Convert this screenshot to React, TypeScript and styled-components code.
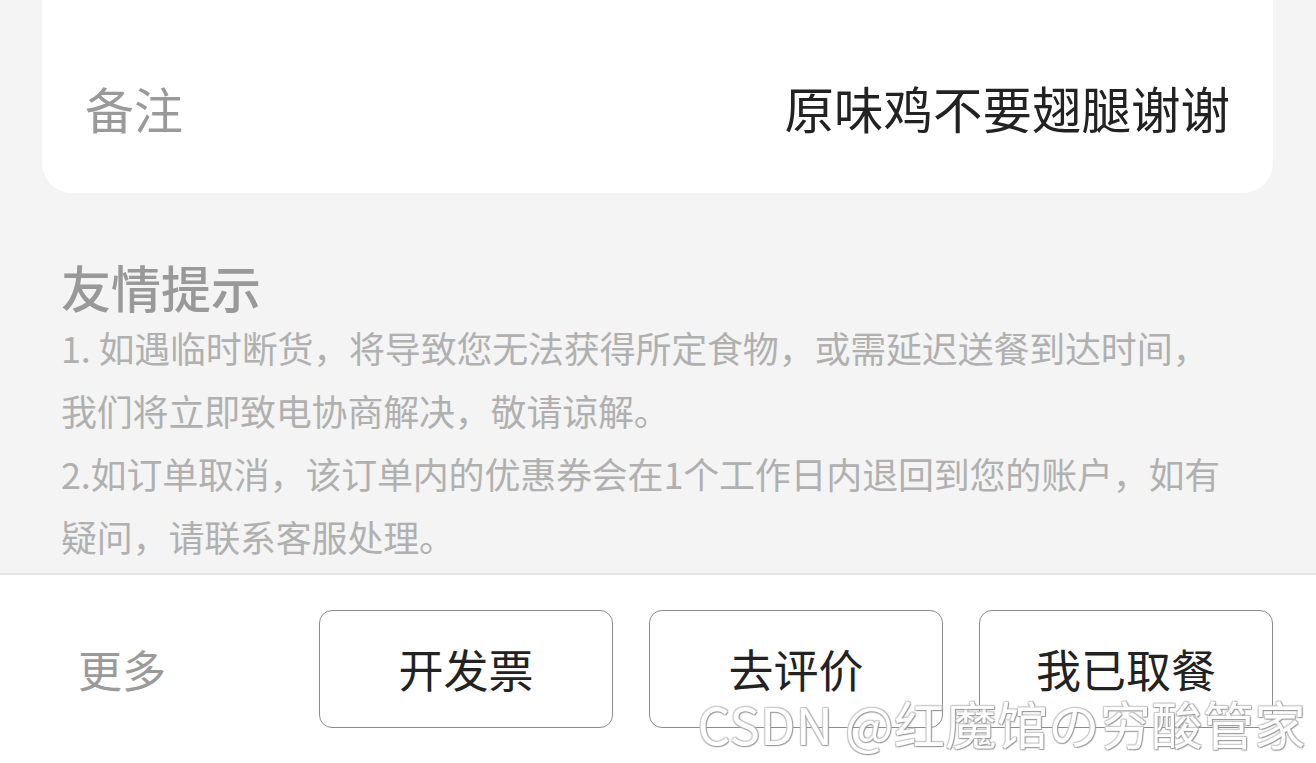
import React from 'react';
import styled, { createGlobalStyle } from 'styled-components';

const GlobalStyle = createGlobalStyle`
  html, body {
    margin: 0;
    padding: 0;
    background: #f4f4f4;
  }
  body {
    font-family: "Noto Sans CJK SC", "Noto Sans", sans-serif;
  }
`;

const actions = ['开发票', '去评价', '我已取餐'];

const App = () => {
  return (
    <Page>
      <GlobalStyle />
      <RemarkCard>
        <RemarkRow>
          <RemarkLabel>备注</RemarkLabel>
          <RemarkValue>原味鸡不要翅腿谢谢</RemarkValue>
        </RemarkRow>
      </RemarkCard>

      <Tips>
        <TipsTitle>友情提示</TipsTitle>
        <TipText>
          1. 如遇临时断货，将导致您无法获得所定食物，或需延迟送餐到达时间，
          <br />
          我们将立即致电协商解决，敬请谅解。
        </TipText>
        <TipText>
          2.如订单取消，该订单内的优惠券会在1个工作日内退回到您的账户，如有
          <br />
          疑问，请联系客服处理。
        </TipText>
      </Tips>

      <Footer>
        <MoreLink>更多</MoreLink>
        <ActionGroup>
          {actions.map((label) => (
            <ActionButton key={label}>{label}</ActionButton>
          ))}
        </ActionGroup>
      </Footer>

      <Watermark>CSDN @红魔馆の穷酸管家</Watermark>
    </Page>
  );
};

const Page = styled.div`
  position: relative;
  height: 763px;
  overflow: hidden;
  display: flex;
  flex-direction: column;
  background: #f4f4f4;
`;

const RemarkCard = styled.div`
  flex: none;
  height: 193px;
  margin: 0 43px 0 42px;
  box-sizing: border-box;
  background: #fff;
  border-radius: 0 0 30px 30px;
  display: flex;
  align-items: flex-end;
  padding: 0 43px 54px 43px;
`;

const RemarkRow = styled.div`
  flex: 1;
  display: flex;
  justify-content: space-between;
  align-items: center;
  height: 64px;
`;

const RemarkLabel = styled.span`
  font-size: 49px;
  color: #9a9a9a;
`;

const RemarkValue = styled.span`
  font-size: 49.5px;
  color: #222;
`;

const Tips = styled.div`
  flex: 1;
  overflow: hidden;
  padding: 63px 40px 0 61px;
`;

const TipsTitle = styled.div`
  font-size: 50px;
  font-weight: 500;
  line-height: 60px;
  color: #999;
`;

const TipText = styled.p`
  margin: 0;
  font-size: 36px;
  line-height: 63px;
  color: #b0b0b0;
  white-space: nowrap;
  letter-spacing: -0.2px;
`;

const Footer = styled.div`
  flex: none;
  height: 190px;
  box-sizing: border-box;
  border-top: 2px solid #e6e6e6;
  background: #fff;
  display: flex;
  align-items: center;
  justify-content: space-between;
  padding: 0 43px 0 78px;
`;

const MoreLink = styled.span`
  font-size: 44px;
  color: #9a9a9a;
`;

const ActionGroup = styled.div`
  display: flex;
  gap: 36px;
`;

const ActionButton = styled.button`
  width: 294px;
  height: 118px;
  box-sizing: border-box;
  border: 1.5px solid #8c8c8c;
  border-radius: 13px;
  background: #fff;
  font-family: "Noto Sans CJK SC", "Noto Sans", sans-serif;
  font-size: 45px;
  line-height: 45px;
  color: #222;
  padding: 0 0 2px;
`;

const Watermark = styled.div`
  position: absolute;
  right: 10px;
  bottom: 16px;
  font-family: "Noto Sans CJK SC", "Noto Sans", sans-serif;
  font-size: 51px;
  line-height: 0.9;
  color: #fff;
  letter-spacing: 0.5px;
  text-shadow: 1px 1px 1px #999, -1px -1px 1px #ccc, 1px -1px 1px #bbb, -1px 1px 1px #bbb;
`;

export default App;
